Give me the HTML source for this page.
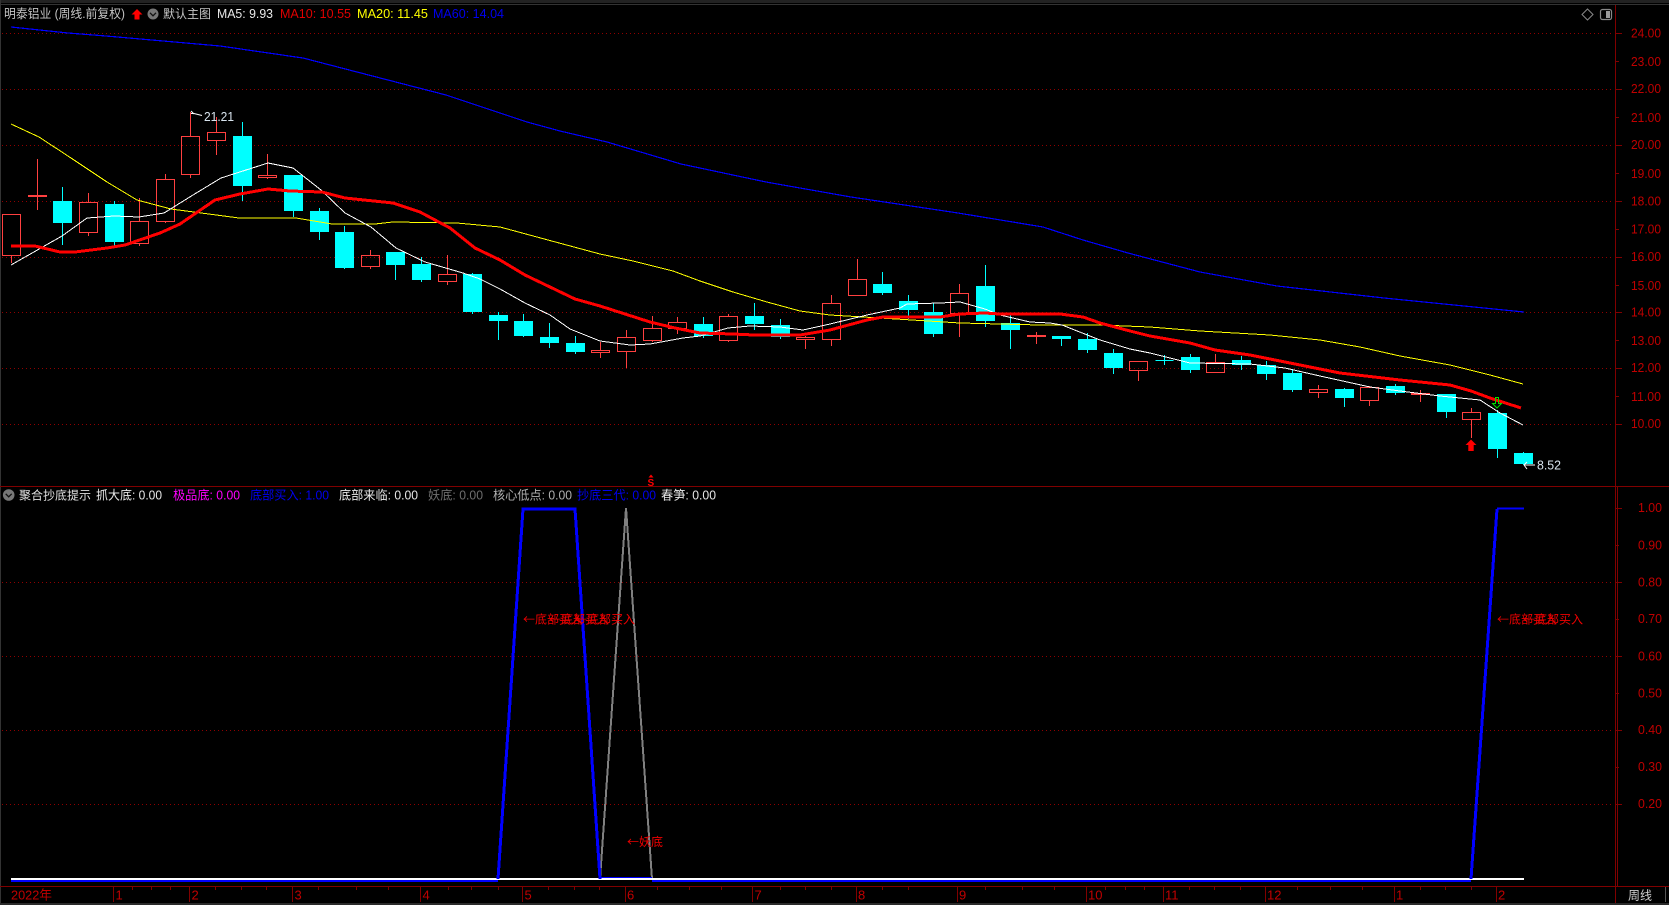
<!DOCTYPE html>
<html lang="zh"><head><meta charset="utf-8"><title>明泰铝业</title>
<style>
html,body{margin:0;padding:0;background:#000;width:1669px;height:905px;overflow:hidden}
svg{display:block;position:absolute;left:0;top:0}
text{font-family:"Liberation Sans","Noto Sans CJK SC",sans-serif;font-size:12.5px;white-space:pre}
.ax{fill:#c00000}
.ax text{font-size:13px}
.lb{fill:#f00000}
.lb text{font-family:"Noto Sans CJK SC","Liberation Sans",sans-serif;font-size:12px}
.c{shape-rendering:crispEdges}
</style></head><body>
<svg width="1669" height="905" viewBox="0 0 1669 905" xmlns="http://www.w3.org/2000/svg">
<rect width="1669" height="905" fill="#000"/>
<!-- top strip -->
<g class="c">
<rect x="0" y="0" width="1669" height="3" fill="#222"/>
<rect x="0" y="4" width="1669" height="1" fill="#333"/>
<rect x="0" y="0" width="1" height="905" fill="#333"/>
<rect x="0" y="903" width="1669" height="2" fill="#2a2a2a"/>
</g>
<!-- grid -->
<g stroke="#900000" stroke-width="1" stroke-dasharray="1 3" class="c">
<path d="M2 33.5H1612M2 89.5H1612M2 145.5H1612M2 201.5H1612M2 257.5H1612M2 312.5H1612M2 368.5H1612M2 424.5H1612M2 582.5H1612M2 656.5H1612M2 730.5H1612M2 804.5H1612"/>
</g>
<!-- frame -->
<g stroke="#800000" fill="none" class="c">
<path d="M1615.5 5V903"/>
<path d="M1617.5 487V886" />
<path d="M0 486.5H1669" />
<path d="M0 886.5H1669" />
<path d="M1616 33.5h6M1616 61.5h3M1616 89.5h6M1616 117.5h3M1616 145.5h6M1616 173.5h3M1616 201.5h6M1616 229.5h3M1616 257.5h6M1616 285.5h3M1616 312.5h6M1616 340.5h3M1616 368.5h6M1616 396.5h3M1616 424.5h6"/>
<path d="M1616 508.5h6M1616 545.5h3M1616 582.5h6M1616 619.5h3M1616 656.5h6M1616 693.5h3M1616 730.5h6M1616 767.5h3M1616 804.5h6"/>
<path d="M113.5 887V902M189.5 887V902M292.5 887V902M420.5 887V902M522.5 887V902M625.5 887V902M752.5 887V902M856.5 887V902M957.5 887V902M1086.5 887V902M1163.5 887V902M1265.5 887V902M1394.5 887V902M1496.5 887V902M1615.5 887V902"/>
<path d="M132.5 887v3M151.5 887v3M170.5 887v3M215.5 887v3M241.5 887v3M266.5 887v3M318.5 887v3M356.5 887v3M388.5 887v3M448.5 887v3M471.5 887v3M498.5 887v3M548.5 887v3M574.5 887v3M599.5 887v3M657.5 887v3M689.5 887v3M721.5 887v3M780.5 887v3M805.5 887v3M831.5 887v3M882.5 887v3M908.5 887v3M985.5 887v3M1022.5 887v3M1054.5 887v3M1105.5 887v3M1125.5 887v3M1144.5 887v3M1189.5 887v3M1214.5 887v3M1240.5 887v3M1297.5 887v3M1330.5 887v3M1362.5 887v3M1420.5 887v3M1445.5 887v3M1471.5 887v3"/>
</g>
<path d="M1665.5 887V902" stroke="#555" class="c"/>
<!-- red candles -->
<path class="c" fill="none" stroke="#ff4040" d="
M2.5 214.5H20.5V255.5H2.5ZM11.5 255V263
M37.5 159V210M28.5 195.5H46.5V196.5H28.5Z
M79.5 202.5H97.5V232.5H79.5ZM88.5 193V202M88.5 233V236
M130.5 221.5H148.5V243.5H130.5ZM139.5 198V221M139.5 244V246
M156.5 179.5H174.5V221.5H156.5ZM165.5 174V179M165.5 222V223
M181.5 136.5H199.5V174.5H181.5ZM190.5 112V136M190.5 175V178
M207.5 132.5H225.5V140.5H207.5ZM216.5 117V132M216.5 141V155
M258.5 175.5H276.5V177.5H258.5ZM267.5 154V175M267.5 178V179
M361.5 255.5H379.5V266.5H361.5ZM370.5 250V255M370.5 267V269
M438.5 274.5H456.5V281.5H438.5ZM447.5 255V274M447.5 282V285
M591.5 350.5H609.5V352.5H591.5ZM600.5 342V350M600.5 353V358
M617.5 337.5H635.5V351.5H617.5ZM626.5 330V337M626.5 352V368
M643.5 328.5H661.5V340.5H643.5ZM652.5 316V328M652.5 341V342
M668.5 322.5H686.5V328.5H668.5ZM677.5 317V322M677.5 329V334
M719.5 316.5H737.5V340.5H719.5ZM728.5 314V316M728.5 341V342
M796.5 337.5H814.5V339.5H796.5ZM805.5 336V337M805.5 340V349
M822.5 303.5H840.5V339.5H822.5ZM831.5 295V303M831.5 340V346
M848.5 279.5H866.5V295.5H848.5ZM857.5 259V279
M950.5 293.5H968.5V313.5H950.5ZM959.5 284V293M959.5 314V337
M1129.5 361.5H1147.5V370.5H1129.5ZM1138.5 371V381
M1206.5 362.5H1224.5V372.5H1206.5ZM1215.5 354V362
M1309.5 389.5H1327.5V392.5H1309.5ZM1318.5 385V389M1318.5 393V398
M1360.5 387.5H1378.5V400.5H1360.5ZM1369.5 386V387M1369.5 401V406
M1462.5 412.5H1480.5V419.5H1462.5ZM1471.5 408V412M1471.5 420V438
"/>
<path class="c" fill="#ff4040" stroke="#ff4040" d="M1036.5 332V344M1027.5 335.5H1045.5V336.5H1027.5ZM1420.5 390V402M1411.5 393.5H1429.5V394.5H1411.5Z"/>
<!-- cyan candles -->
<path class="c" fill="#0ff" stroke="#0ff" d="
M62.5 187V245M53.5 201.5H71.5V222.5H53.5Z
M114.5 201V246M105.5 204.5H123.5V241.5H105.5Z
M242.5 122V201M233.5 136.5H251.5V185.5H233.5Z
M293.5 175V217M284.5 175.5H302.5V210.5H284.5Z
M319.5 208V240M310.5 211.5H328.5V231.5H310.5Z
M344.5 226V269M335.5 232.5H353.5V267.5H335.5Z
M395.5 252V280M386.5 252.5H404.5V264.5H386.5Z
M421.5 257V282M412.5 264.5H430.5V279.5H412.5Z
M472.5 273V314M463.5 274.5H481.5V311.5H463.5Z
M498.5 312V340M489.5 315.5H507.5V320.5H489.5Z
M523.5 314V337M514.5 321.5H532.5V335.5H514.5Z
M549.5 323V348M540.5 337.5H558.5V342.5H540.5Z
M575.5 336V354M566.5 343.5H584.5V351.5H566.5Z
M703.5 317V338M694.5 324.5H712.5V335.5H694.5Z
M754.5 303V330M745.5 316.5H763.5V323.5H745.5Z
M780.5 319V339M771.5 325.5H789.5V336.5H771.5Z
M882.5 272V295M873.5 284.5H891.5V292.5H873.5Z
M908.5 295V319M899.5 301.5H917.5V309.5H899.5Z
M933.5 303V337M924.5 312.5H942.5V333.5H924.5Z
M985.5 265V327M976.5 286.5H994.5V320.5H976.5Z
M1010.5 315V349M1001.5 323.5H1019.5V329.5H1001.5Z
M1061.5 336V346M1052.5 336.5H1070.5V338.5H1052.5Z
M1087.5 333V353M1078.5 339.5H1096.5V349.5H1078.5Z
M1113.5 349V374M1104.5 353.5H1122.5V367.5H1104.5Z
M1164.5 355V365M1155.5 360.5H1173.5
M1190.5 354V373M1181.5 357.5H1199.5V369.5H1181.5Z
M1241.5 356V370M1232.5 360.5H1250.5V364.5H1232.5Z
M1266.5 361V380M1257.5 365.5H1275.5V373.5H1257.5Z
M1292.5 369V392M1283.5 373.5H1301.5V389.5H1283.5Z
M1344.5 388V407M1335.5 389.5H1353.5V397.5H1335.5Z
M1395.5 384V395M1386.5 386.5H1404.5V392.5H1386.5Z
M1446.5 394V418M1437.5 394.5H1455.5V411.5H1437.5Z
M1497.5 410V458M1488.5 413.5H1506.5V448.5H1488.5Z
M1523.5 452V465M1514.5 453.5H1532.5V463.5H1514.5Z
"/>
<!-- MA lines -->
<polyline class="c" fill="none" stroke="#0000ff" stroke-width="1.2" points="11,27 68,33 106,36 186,43 220,46 303,58 357,72 446,95 527,122 560,131 607,142 681,164 766,182 851,197 958,213 1043,227 1083,240 1128,253 1200,272 1277,286 1384,298 1524,312"/>
<polyline class="c" fill="none" stroke="#ffff00" stroke-width="1" points="11,124 39,137 71,158 107,182 137,200 171,209 239,218 296,218 332,224 375,224 393,222 457,223 500,227 548,240 600,254 633,261 673,271 700,281 733,292 767,302 800,311 830,315 880,318 960,323 1040,325 1100,325 1150,327 1200,331 1270,335 1320,340 1360,347 1400,356 1450,365 1490,375 1523,384"/>
<polyline class="c" fill="none" stroke="#ffffff" stroke-width="1" points="11,265 62,236 87,218 114,216 139,217 164,213 193,195 221,178 268,163 293,168 321,190 345,213 371,227 396,248 425,262 463,273 480,279 500,289 525,303 550,315 570,329 600,341 630,345 650,344 683,338 700,336 728,328 750,326 780,327 803,330 830,324 867,315 900,308 907,304 940,303 960,302 985,309 1000,315 1030,322 1050,323 1062,325 1100,340 1130,349 1150,353 1190,363 1250,364 1285,368 1320,376 1370,387 1400,391 1440,396 1470,399 1480,400 1500,413 1523,425"/>
<polyline class="c" fill="none" stroke="#ff0000" stroke-width="3" points="11,246 35,246 60,252 75,252 107,248 125,245 160,233 180,224 215,200 240,194 268,189 290,191 322,192 345,198 393,203 420,212 450,228 475,248 500,260 525,275 550,287 575,299 600,306 625,314 650,322 675,328 700,333 733,334 754,335 800,335 830,330 867,320 883,317 940,317 960,314 985,313 1000,314 1060,314 1083,317 1100,323 1130,331 1150,336 1190,343 1215,350 1250,355 1300,365 1340,373 1400,380 1450,385 1471,391 1490,398 1521,408"/>
<!-- price markers -->
<path d="M191 111L194 114M191 113.5H194L202 115.5" stroke="#fff" fill="none"/>
<text x="204" y="121" fill="#d8e4ee" textLength="30" lengthAdjust="spacingAndGlyphs" style="font-size:13px">21.21</text>
<path d="M1524 465H1535M1524 465L1527 462M1524 465L1527 469" stroke="#fff" fill="none"/>
<text x="1537" y="469.500" fill="#d8e4ee" textLength="24" lengthAdjust="spacingAndGlyphs" style="font-size:13px">8.52</text>
<!-- signal arrows -->
<path d="M1495.5 397.500H1498.500V403.500H1501.500L1497 408L1492.500 403.500H1495.500Z" fill="none" stroke="#00e000"/>
<path d="M1471 439.500L1476.500 445H1473.700V451H1468.300V445H1465.500Z" fill="#ff0000"/>
<!-- top-right icons -->
<path d="M1587.500 9L1593 14.500L1587.500 20L1582 14.500Z" fill="none" stroke="#888"/>
<rect x="1600.500" y="9.500" width="11" height="10" rx="2" fill="none" stroke="#888" stroke-width="1.200"/>
<rect x="1606" y="11" width="4" height="7" fill="#999"/>
<!-- header -->
<text x="4" y="18" fill="#c4c4c4" textLength="121" lengthAdjust="spacingAndGlyphs">明泰铝业 (周线.前复权)</text>
<path d="M137 9L142.500 14.500H139.500V19.500H134.500V14.500H131.500Z" fill="#ff0000"/>
<circle cx="153" cy="14" r="5.500" fill="#777"/><path d="M150 12.800L153 15.800L156 12.800" stroke="#111" stroke-width="1.300" fill="none"/>
<text x="163" y="18" fill="#c4c4c4" style="font-size:12px">默认主图</text>
<text x="217" y="18" fill="#e8e8e8" textLength="56" lengthAdjust="spacingAndGlyphs" style="font-size:13px">MA5: 9.93</text>
<text x="280" y="18" fill="#e00000" textLength="71" lengthAdjust="spacingAndGlyphs" style="font-size:13px">MA10: 10.55</text>
<text x="357" y="18" fill="#ffff00" textLength="71" lengthAdjust="spacingAndGlyphs" style="font-size:13px">MA20: 11.45</text>
<text x="433" y="18" fill="#0000f0" textLength="71" lengthAdjust="spacingAndGlyphs" style="font-size:13px">MA60: 14.04</text>
<!-- price axis -->
<g class="ax">
<text x="1631" y="37.500" textLength="30" lengthAdjust="spacingAndGlyphs">24.00</text>
<text x="1631" y="66" textLength="30" lengthAdjust="spacingAndGlyphs">23.00</text>
<text x="1631" y="93" textLength="30" lengthAdjust="spacingAndGlyphs">22.00</text>
<text x="1631" y="122" textLength="30" lengthAdjust="spacingAndGlyphs">21.00</text>
<text x="1631" y="149" textLength="30" lengthAdjust="spacingAndGlyphs">20.00</text>
<text x="1631" y="178" textLength="30" lengthAdjust="spacingAndGlyphs">19.00</text>
<text x="1631" y="205.500" textLength="30" lengthAdjust="spacingAndGlyphs">18.00</text>
<text x="1631" y="233.500" textLength="30" lengthAdjust="spacingAndGlyphs">17.00</text>
<text x="1631" y="261" textLength="30" lengthAdjust="spacingAndGlyphs">16.00</text>
<text x="1631" y="290" textLength="30" lengthAdjust="spacingAndGlyphs">15.00</text>
<text x="1631" y="316.500" textLength="30" lengthAdjust="spacingAndGlyphs">14.00</text>
<text x="1631" y="345" textLength="30" lengthAdjust="spacingAndGlyphs">13.00</text>
<text x="1631" y="372" textLength="30" lengthAdjust="spacingAndGlyphs">12.00</text>
<text x="1631" y="401" textLength="30" lengthAdjust="spacingAndGlyphs">11.00</text>
<text x="1631" y="428" textLength="30" lengthAdjust="spacingAndGlyphs">10.00</text>
<text x="1638" y="512" textLength="24" lengthAdjust="spacingAndGlyphs">1.00</text>
<text x="1638" y="549.500" textLength="24" lengthAdjust="spacingAndGlyphs">0.90</text>
<text x="1638" y="586.500" textLength="24" lengthAdjust="spacingAndGlyphs">0.80</text>
<text x="1638" y="623" textLength="24" lengthAdjust="spacingAndGlyphs">0.70</text>
<text x="1638" y="660.500" textLength="24" lengthAdjust="spacingAndGlyphs">0.60</text>
<text x="1638" y="697.500" textLength="24" lengthAdjust="spacingAndGlyphs">0.50</text>
<text x="1638" y="734" textLength="24" lengthAdjust="spacingAndGlyphs">0.40</text>
<text x="1638" y="771" textLength="24" lengthAdjust="spacingAndGlyphs">0.30</text>
<text x="1638" y="808" textLength="24" lengthAdjust="spacingAndGlyphs">0.20</text>
</g>
<!-- S marker -->
<text x="647.500" y="486" fill="#ff0000" style="font-size:10px;font-weight:bold">S</text>
<path d="M651 474.500L653.500 477.500H648.500Z" fill="#ff0000"/>
<!-- lower header -->
<circle cx="8.700" cy="495" r="5.800" fill="#777"/><path d="M5.700 493.800L8.700 496.800L11.700 493.800" stroke="#111" stroke-width="1.300" fill="none"/>
<text x="19" y="499.500" fill="#e0e0e0" style="font-size:12px">聚合抄底提示</text>
<text x="96" y="499.500" fill="#e8e8e8" textLength="66" lengthAdjust="spacingAndGlyphs" style="font-size:12.5px">抓大底: 0.00</text>
<text x="173" y="499.500" fill="#ff00ff" textLength="67" lengthAdjust="spacingAndGlyphs">极品底: 0.00</text>
<text x="250" y="499.500" fill="#0000f0" textLength="79" lengthAdjust="spacingAndGlyphs">底部买入: 1.00</text>
<text x="339" y="499.500" fill="#e8e8e8" textLength="79" lengthAdjust="spacingAndGlyphs">底部来临: 0.00</text>
<text x="428" y="499.500" fill="#6e6e6e" textLength="55" lengthAdjust="spacingAndGlyphs">妖底: 0.00</text>
<text x="493" y="499.500" fill="#b0b0b0" textLength="79" lengthAdjust="spacingAndGlyphs">核心低点: 0.00</text>
<text x="577" y="499.500" fill="#0000f0" textLength="79" lengthAdjust="spacingAndGlyphs">抄底三代: 0.00</text>
<text x="661" y="499.500" fill="#e8e8e8" textLength="55" lengthAdjust="spacingAndGlyphs">春笋: 0.00</text>
<!-- lower pane lines -->
<polyline class="c" fill="none" stroke="#808080" stroke-width="2" points="600,879 626,508 652,879"/>
<path class="c" d="M11 879H1524" stroke="#fff" stroke-width="2" fill="none"/>
<path class="c" d="M11 881H498M652 881H1471" stroke="#0000ff" stroke-width="2" fill="none"/>
<path class="c" d="M600 877.500H652" stroke="#0000ff" stroke-width="1" fill="none"/>
<polyline class="c" fill="none" stroke="#0000ff" stroke-width="3" points="498,879 523,509 575,509 600,879"/>
<polyline class="c" fill="none" stroke="#0000ff" stroke-width="3" points="1471,879 1497,509"/>
<path class="c" d="M1497 508.500H1524" stroke="#0000ff" stroke-width="2" fill="none"/>
<!-- pane labels -->
<g class="lb">
<text x="523" y="623.500">←底部买入</text>
<text x="549" y="623.500">←底部买入</text>
<text x="575" y="623.500">←底部买入</text>
<text x="1497" y="623.500">←底部买入</text>
<text x="1523" y="623.500">←底部买入</text>
<text x="627" y="846">←妖底</text>
</g>
<!-- date axis -->
<g class="ax">
<text x="11" y="899.500" textLength="41" lengthAdjust="spacingAndGlyphs">2022年</text>
<text x="115.500" y="899.500">1</text><text x="191.500" y="899.500">2</text><text x="294.500" y="899.500">3</text>
<text x="422.500" y="899.500">4</text><text x="524.500" y="899.500">5</text><text x="627" y="899.500">6</text>
<text x="754.500" y="899.500">7</text><text x="858" y="899.500">8</text><text x="959" y="899.500">9</text>
<text x="1088" y="899.500">10</text><text x="1165" y="899.500">11</text><text x="1267" y="899.500">12</text>
<text x="1396" y="899.500">1</text><text x="1498" y="899.500">2</text>
</g>
<text x="1628" y="899.500" fill="#d0d0d0" style="font-size:12px">周线</text>
</svg>
</body></html>
